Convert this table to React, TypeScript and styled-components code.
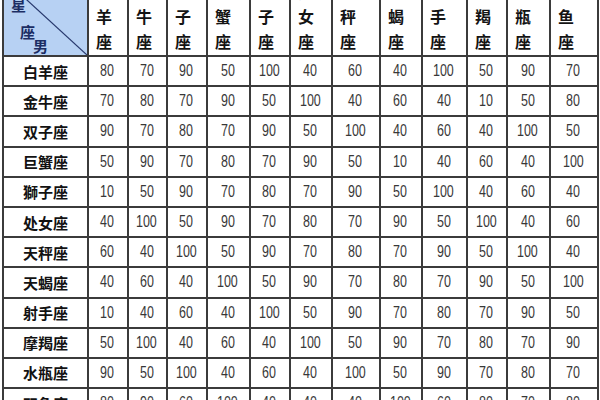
import React from 'react';
import styled, { createGlobalStyle } from 'styled-components';

const GlobalStyle = createGlobalStyle`
  html, body {
    margin: 0;
    padding: 0;
    background: #ffffff;
    overflow: hidden;
  }
`;

// cell widths between the 2px grid lines
const COL_WIDTHS = [83, 38, 37, 38, 41, 38, 40, 46, 40, 43, 38, 41, 46];

const SIGNS = [
  '白羊座',
  '金牛座',
  '双子座',
  '巨蟹座',
  '獅子座',
  '处女座',
  '天秤座',
  '天蝎座',
  '射手座',
  '摩羯座',
  '水瓶座',
  '双鱼座',
];

const SCORES: number[][] = [
  [80, 70, 90, 50, 100, 40, 60, 40, 100, 50, 90, 70],
  [70, 80, 70, 90, 50, 100, 40, 60, 40, 10, 50, 80],
  [90, 70, 80, 70, 90, 50, 100, 40, 60, 40, 100, 50],
  [50, 90, 70, 80, 70, 90, 50, 10, 40, 60, 40, 100],
  [10, 50, 90, 70, 80, 70, 90, 50, 100, 40, 60, 40],
  [40, 100, 50, 90, 70, 80, 70, 90, 50, 100, 40, 60],
  [60, 40, 100, 50, 90, 70, 80, 70, 90, 50, 100, 40],
  [40, 60, 40, 100, 50, 90, 70, 80, 70, 90, 50, 100],
  [10, 40, 60, 40, 100, 50, 90, 70, 80, 70, 90, 50],
  [50, 100, 40, 60, 40, 100, 50, 90, 70, 80, 70, 90],
  [90, 50, 100, 40, 60, 40, 100, 50, 90, 70, 80, 70],
  [80, 90, 60, 100, 40, 40, 40, 100, 60, 80, 70, 80],
];

const CJK = `"Noto Sans CJK SC", "Noto Sans", sans-serif`;

const Grid = styled.div`
  display: grid;
  grid-template-columns: ${COL_WIDTHS.map((w) => `${w}px`).join(' ')};
  grid-template-rows: 76px;
  grid-auto-rows: 28.2px;
  gap: 2px;
  padding: 2px;
  margin: -23px 0 0 2px;
  width: max-content;
  background: #3b3b3b;
`;

const CornerCell = styled.div`
  position: relative;
  overflow: hidden;
  display: flex;
  flex-direction: column;
  align-items: flex-start;
  padding-top: 19px;
  background: #b7d1f3;
  font-family: ${CJK};
  font-weight: 700;
  font-size: 15px;
  line-height: 14px;
  color: #1b2d63;
`;

const CornerLabel = styled.span<{ $indent: number; $gap: number }>`
  display: block;
  margin-left: ${({ $indent }) => $indent}px;
  margin-top: ${({ $gap }) => $gap}px;
`;

const Diagonal = styled.svg`
  position: absolute;
  inset: 0;
  width: 100%;
  height: 100%;
`;

const HeaderCell = styled.div`
  overflow: hidden;
  display: flex;
  flex-direction: column;
  justify-content: flex-end;
  padding: 0 0 1px 7px;
  background: #ffffff;
  font-family: ${CJK};
  font-weight: 700;
  font-size: 16px;
  line-height: 25px;
  color: #141414;
`;

const LabelCell = styled.div`
  display: flex;
  align-items: center;
  justify-content: center;
  background: #ffffff;
  font-family: ${CJK};
  font-weight: 700;
  font-size: 15px;
  color: #121212;
`;

const ValueCell = styled.div`
  display: flex;
  align-items: center;
  justify-content: center;
  background: #ffffff;
  font-family: "Liberation Sans", Arial, sans-serif;
  font-size: 16px;
  color: #383838;
`;

const Num = styled.span`
  display: inline-block;
  transform: scaleX(0.78);
  margin-left: -2px;
`;

export default function App() {
  return (
    <>
      <GlobalStyle />
      <Grid>
        <CornerCell>
          <Diagonal viewBox="0 0 83 76" preserveAspectRatio="none">
            <line x1="0" y1="0" x2="83" y2="76" stroke="#27386c" strokeWidth="1.2" />
          </Diagonal>
          <CornerLabel $indent={7} $gap={0}>星</CornerLabel>
          <CornerLabel $indent={16} $gap={13}>座</CornerLabel>
          <CornerLabel $indent={29} $gap={0}>男</CornerLabel>
        </CornerCell>
        {SIGNS.map((sign) => (
          <HeaderCell key={`h-${sign}`}>
            {sign.split('').map((ch, i) => (
              <span key={i}>{ch}</span>
            ))}
          </HeaderCell>
        ))}
        {SIGNS.map((sign, r) => (
          <React.Fragment key={sign}>
            <LabelCell>{sign}</LabelCell>
            {SCORES[r].map((v, c) => (
              <ValueCell key={c}>
                <Num>{v}</Num>
              </ValueCell>
            ))}
          </React.Fragment>
        ))}
      </Grid>
    </>
  );
}
